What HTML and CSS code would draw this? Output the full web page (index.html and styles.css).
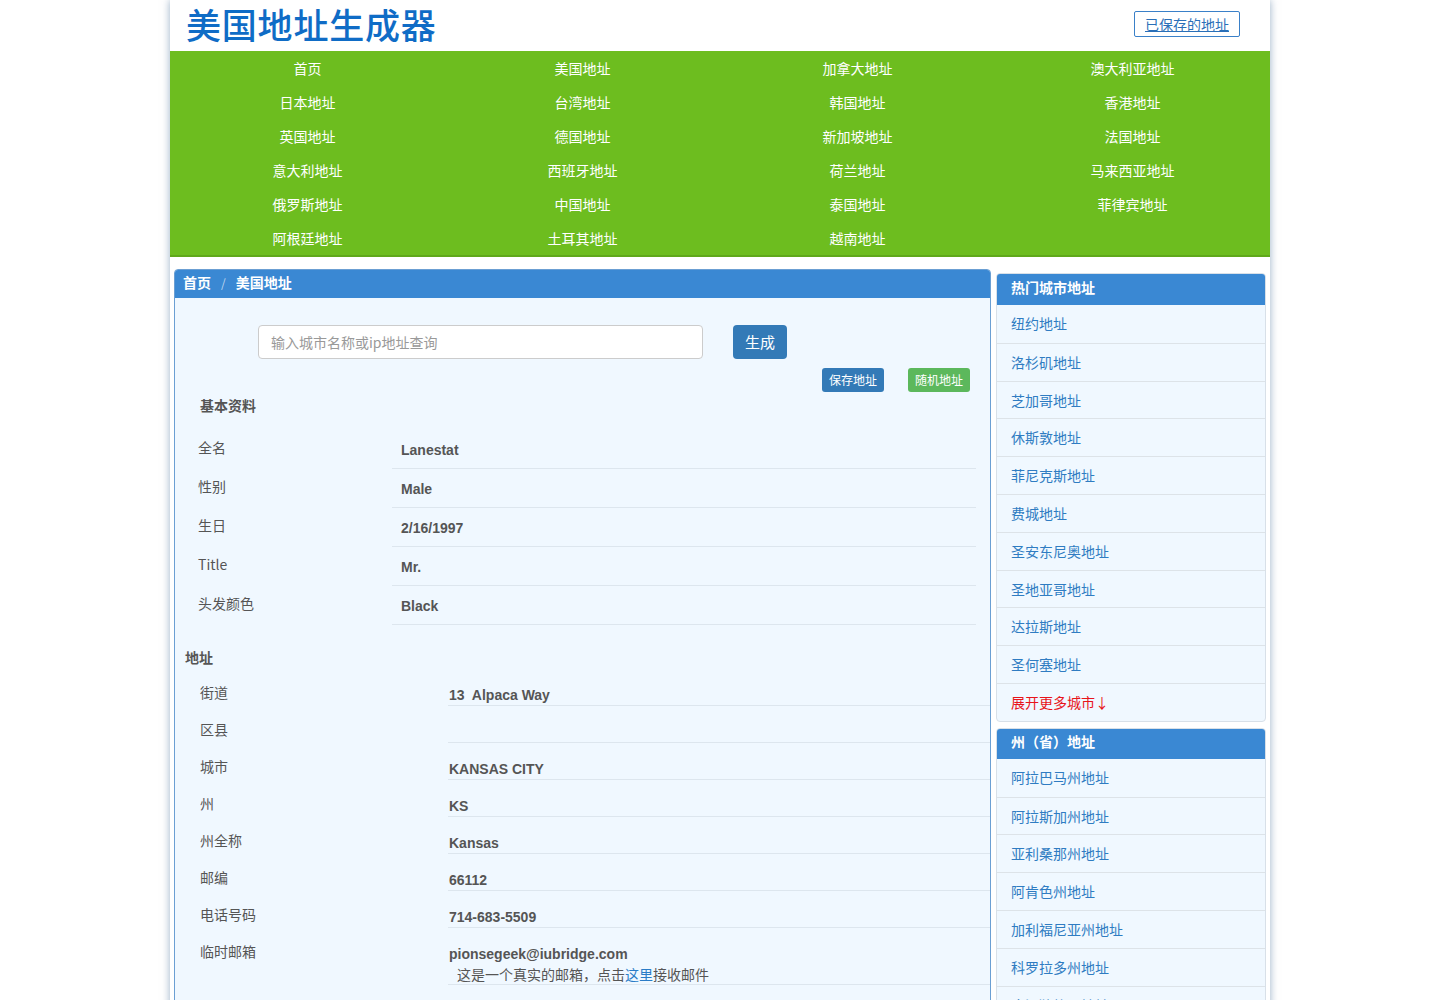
FILE: index.html
```html
<!DOCTYPE html>
<html lang="zh-CN">
<head>
<meta charset="utf-8">
<title>美国地址生成器</title>
<link rel="stylesheet" href="styles.css">
</head>
<body>
<div class="wrap">
  <header class="top">
    <h1 class="logo">美国地址生成器</h1>
    <a class="saved" href="#">已保存的地址</a>
  </header>
  <nav class="nav">
    <a href="#">首页</a><a href="#">美国地址</a><a href="#">加拿大地址</a><a href="#">澳大利亚地址</a>
    <a href="#">日本地址</a><a href="#">台湾地址</a><a href="#">韩国地址</a><a href="#">香港地址</a>
    <a href="#">英国地址</a><a href="#">德国地址</a><a href="#">新加坡地址</a><a href="#">法国地址</a>
    <a href="#">意大利地址</a><a href="#">西班牙地址</a><a href="#">荷兰地址</a><a href="#">马来西亚地址</a>
    <a href="#">俄罗斯地址</a><a href="#">中国地址</a><a href="#">泰国地址</a><a href="#">菲律宾地址</a>
    <a href="#">阿根廷地址</a><a href="#">土耳其地址</a><a href="#">越南地址</a>
  </nav>
  <div class="main">
    <section class="panel">
      <div class="crumb"><a href="#">首页</a><span class="sep">/</span><span>美国地址</span></div>
      <div class="panel-body">
        <div class="search">
          <input class="search-input" type="text" placeholder="输入城市名称或ip地址查询">
          <button class="btn btn-gen">生成</button>
        </div>
        <div class="actions">
          <button class="btn-sm btn-blue">保存地址</button>
          <button class="btn-sm btn-green">随机地址</button>
        </div>
        <h3 class="sec-title sec-basic">基本资料</h3>
        <div class="info-grid">
          <div class="lab">全名</div><div class="val">Lanestat</div>
          <div class="lab">性别</div><div class="val">Male</div>
          <div class="lab">生日</div><div class="val">2/16/1997</div>
          <div class="lab">Title</div><div class="val">Mr.</div>
          <div class="lab">头发颜色</div><div class="val">Black</div>
        </div>
        <h3 class="sec-title sec-addr">地址</h3>
        <div class="addr-grid">
          <div class="lab">街道</div><div class="val">13&nbsp; Alpaca Way</div>
          <div class="lab">区县</div><div class="val"></div>
          <div class="lab">城市</div><div class="val">KANSAS CITY</div>
          <div class="lab">州</div><div class="val">KS</div>
          <div class="lab">州全称</div><div class="val">Kansas</div>
          <div class="lab">邮编</div><div class="val">66112</div>
          <div class="lab">电话号码</div><div class="val">714-683-5509</div>
          <div class="lab lab-mail">临时邮箱</div>
          <div class="val val-mail">pionsegeek@iubridge.com<span class="note">这是一个真实的邮箱，点击<a href="#">这里</a>接收邮件</span></div>
        </div>
      </div>
    </section>
    <aside class="side">
      <div class="box">
        <div class="box-head">热门城市地址</div>
        <ul class="list">
          <li><a href="#">纽约地址</a></li>
          <li><a href="#">洛杉矶地址</a></li>
          <li><a href="#">芝加哥地址</a></li>
          <li><a href="#">休斯敦地址</a></li>
          <li><a href="#">菲尼克斯地址</a></li>
          <li><a href="#">费城地址</a></li>
          <li><a href="#">圣安东尼奥地址</a></li>
          <li><a href="#">圣地亚哥地址</a></li>
          <li><a href="#">达拉斯地址</a></li>
          <li><a href="#">圣何塞地址</a></li>
          <li><a class="more" href="#">展开更多城市↓</a></li>
        </ul>
      </div>
      <div class="box">
        <div class="box-head box-head2">州（省）地址</div>
        <ul class="list">
          <li><a href="#">阿拉巴马州地址</a></li>
          <li><a href="#">阿拉斯加州地址</a></li>
          <li><a href="#">亚利桑那州地址</a></li>
          <li><a href="#">阿肯色州地址</a></li>
          <li><a href="#">加利福尼亚州地址</a></li>
          <li><a href="#">科罗拉多州地址</a></li>
          <li><a href="#">康涅狄格州地址</a></li>
          <li><a href="#">特拉华州地址</a></li>
        </ul>
      </div>
    </aside>
  </div>
</div>
</body>
</html>
```
FILE: styles.css
```css
* { box-sizing: border-box; }
html, body { margin: 0; padding: 0; }
body {
  background: #fff;
  font-family: "Liberation Sans", "Noto Sans CJK SC", sans-serif;
  font-size: 14px;
  color: #555;
}
a { text-decoration: none; }
.wrap {
  width: 1100px;
  margin: 0 auto;
  background: #fff;
  box-shadow: 0 0 8px rgba(70, 110, 150, 0.55);
  min-height: 1000px;
}
.top {
  height: 51px;
  display: flex;
  align-items: flex-start;
  justify-content: space-between;
  padding: 0 30px 0 16px;
}
.logo {
  margin: 0;
  font-family: "Noto Sans CJK SC", sans-serif;
  font-size: 35px;
  font-weight: 500;
  color: #0f6cc6;
  line-height: 48px;
  letter-spacing: 0.8px;
}
.saved {
  display: block;
  border: 1px solid #3a80c8;
  border-radius: 2px;
  padding: 0 10px;
  height: 26px;
  line-height: 24px;
  margin-top: 11px;
  color: #2a6fb8;
  text-decoration: underline;
  font-family: "Noto Sans CJK SC", sans-serif;
  font-size: 14px;
}
.nav {
  background: #6dbd1f;
  border-bottom: 2px solid #5fa81a;
  display: grid;
  grid-template-columns: repeat(4, 1fr);
  grid-auto-rows: 34px;
}
.nav a {
  color: #fff;
  text-align: center;
  line-height: 34px;
  font-family: "Noto Sans CJK SC", sans-serif;
  font-size: 14px;
}
.main {
  display: flex;
  align-items: flex-start;
  padding: 12px 4px 0 4px;
  gap: 5px;
}
.panel {
  width: 817px;
  border: 1px solid #6b9fd3;
  border-radius: 4px 4px 0 0;
  background: #f0f8ff;
  min-height: 760px;
}
.crumb {
  background: #3a88d3;
  height: 28px;
  line-height: 25px;
  padding-left: 8px;
  color: #fff;
  font-weight: bold;
  font-family: "Noto Sans CJK SC", sans-serif;
  border-radius: 3px 3px 0 0;
}
.crumb a { color: #fff; }
.crumb .sep {
  color: #bcd6ee;
  font-weight: normal;
  padding: 0 10px;
  font-size: 12px;
}
.panel-body {
  padding: 27px 0 0 0;
}
.search {
  display: flex;
  align-items: center;
  padding-left: 83px;
  gap: 30px;
}
.search-input {
  width: 445px;
  height: 34px;
  border: 1px solid #ccc;
  border-radius: 4px;
  background: #fff;
  padding: 0 12px;
  font-family: "Noto Sans CJK SC", sans-serif;
  font-size: 14px;
  color: #555;
}
.search-input::placeholder { color: #999; }
.btn {
  border: none;
  border-radius: 4px;
  color: #fff;
  font-family: "Noto Sans CJK SC", sans-serif;
}
.btn-gen {
  background: #337ab7;
  width: 54px;
  height: 34px;
  font-size: 15px;
  line-height: 30px;
}
.actions {
  display: flex;
  justify-content: flex-end;
  gap: 24px;
  padding-right: 20px;
  margin-top: 9px;
}
.btn-sm {
  border: none;
  border-radius: 3px;
  color: #fff;
  height: 24px;
  width: 62px;
  padding: 0;
  font-size: 12px;
  line-height: 22px;
  font-family: "Noto Sans CJK SC", sans-serif;
}
.btn-blue { background: #337ab7; }
.btn-green { background: #5cb85c; }
.sec-title {
  margin: 0;
  font-family: "Noto Sans CJK SC", sans-serif;
  font-size: 14px;
  font-weight: bold;
  color: #555;
  line-height: 20px;
}
.sec-basic { padding-left: 25px; margin-top: 3px; }
.sec-addr { padding-left: 10px; margin-top: 22px; }
.info-grid {
  display: grid;
  grid-template-columns: 202px 584px;
  grid-auto-rows: 39px;
  margin: 15px 0 0 15px;
}
.info-grid .lab {
  padding-left: 8px;
  line-height: 35px;
  font-family: "Noto Sans CJK SC", sans-serif;
  color: #555;
}
.info-grid .val {
  border-bottom: 1px solid #dde6ee;
  padding-left: 9px;
  line-height: 41px;
  font-weight: bold;
  color: #555;
}
.addr-grid {
  display: grid;
  grid-template-columns: 256px 542px;
  grid-auto-rows: 37px;
  margin: 2px 0 0 17px;
}
.addr-grid .lab {
  padding-left: 8px;
  line-height: 46px;
  font-family: "Noto Sans CJK SC", sans-serif;
  color: #555;
}
.addr-grid .val {
  border-bottom: 1px solid #dde6ee;
  padding-left: 1px;
  line-height: 52px;
  font-weight: bold;
  color: #555;
}
.addr-grid .val-mail {
  line-height: 20px;
  padding-top: 16px;
  height: 57px;
}
.addr-grid .lab-mail { height: 57px; }
.note {
  display: block;
  font-weight: normal;
  padding-left: 8px;
  font-family: "Noto Sans CJK SC", sans-serif;
  color: #555;
}
.note a { color: #2a7cc7; }
.side {
  width: 270px;
  margin-top: 4px;
  display: flex;
  flex-direction: column;
  gap: 6px;
}
.box {
  border: 1px solid #d8e0e8;
  border-radius: 4px;
  background: #f0f8ff;
  overflow: hidden;
}
.box-head {
  background: #3a88d3;
  color: #fff;
  height: 31px;
  line-height: 27px;
  padding-left: 14px;
  font-weight: bold;
  font-family: "Noto Sans CJK SC", sans-serif;
}
.box-head2 { height: 30px; line-height: 25px; }
.list {
  list-style: none;
  margin: 0;
  padding: 0;
}
.list li {
  height: 37.8px;
  line-height: 36px;
  padding-left: 14px;
  border-top: 1px solid #dde3e8;
}
.list li:first-child { border-top: none; }
.list a {
  color: #2f7cc2;
  font-family: "Noto Sans CJK SC", sans-serif;
}
.list a.more { color: #e8141a; }
```
